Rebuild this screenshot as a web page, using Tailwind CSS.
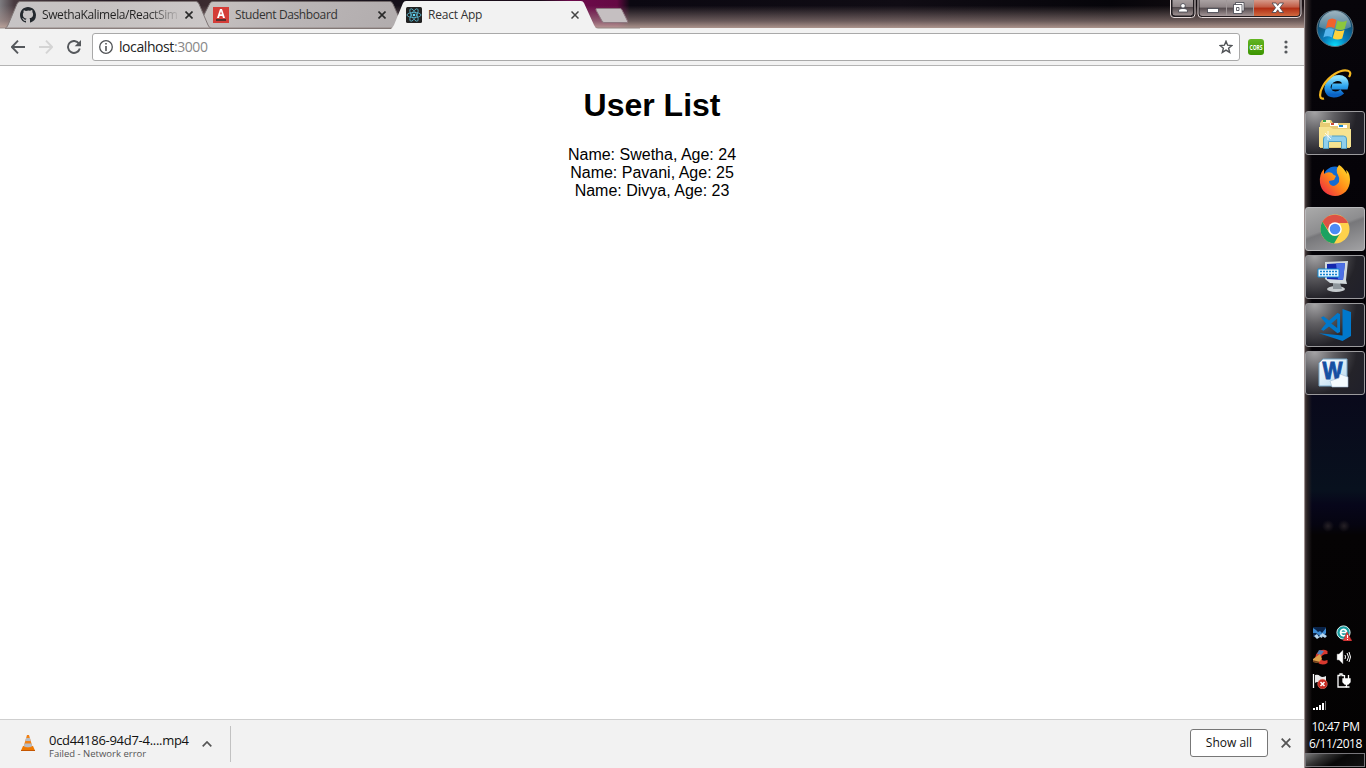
<!DOCTYPE html>
<html lang="en">
<head>
<meta charset="utf-8">
<title>React App</title>
<script src="https://cdn.jsdelivr.net/npm/@tailwindcss/browser@4"></script>
</head>
<body class="w-[1366px] h-[768px] overflow-hidden flex bg-white font-['Open_Sans',sans-serif] text-[#333]">
<main class="w-[1304px] h-full flex flex-col shrink-0">
  <!-- tab strip -->
  <header class="relative h-[28px] shrink-0 flex bg-[linear-gradient(90deg,#7e7c80_0,#493b40_14px,#241923_120px,#3c2c30_210px,#15101a_390px,#1b0c19_540px,#6d0b4c_570px,#650943_617px,#0b0811_630px,#100c14_900px,#06050a_1110px,#1b1215_1304px)]">
    <div class="absolute inset-0 bg-[linear-gradient(180deg,transparent_20%,#a8908b99_75%,#c5aaa0dd_100%)]"></div>
    <svg class="absolute left-0 top-0" width="640" height="29" viewBox="0 0 640 29">
      <defs><linearGradient id="tab" x1="0" x2="1"><stop stop-color="#c7c4c5"/><stop offset=".45" stop-color="#c6c2c1"/><stop offset="1" stop-color="#cbc7c7"/></linearGradient>
      <linearGradient id="tabb" x1="0" x2="1" y2=".1"><stop stop-color="#c8c3c1"/><stop offset=".5" stop-color="#bab5b6"/><stop offset="1" stop-color="#b2adae"/></linearGradient></defs>
      <path d="M197 28.500L210 3Q211 1.500 213 1.500H390Q392 1.500 393 4L404 28.500Z" fill="url(#tabb)" stroke="#706869"/>
      <path d="M5 28.500Q7 27.500 8 25L17 4Q18 1.500 20 1.500H196Q198 1.500 199 4L208 25Q209 28 212 28.500Z" fill="url(#tab)" stroke="#807777"/>
      <path d="M0 28H640" stroke="#938784"/>
      <path d="M391 29Q393 27 394 25L403 3Q404 1 406 1H581Q583 1 584 3L594 25Q595 28 598 29Z" fill="#f2f2f2"/>
      <path d="M597 8.500H620Q621.500 8.500 622 10L627.500 21Q628 22.500 627 22.500H604Q602.500 22.500 602 21L596 10Q595.500 8.500 597 8.500Z" fill="#c5bfc1" stroke="#8d7880"/>
    </svg>
    <div class="relative w-[193px] flex items-center pl-5 pt-0.5">
      <svg width="16" height="16" viewBox="0 0 16 16" fill="#24292e"><path d="M8 0C3.600 0 0 3.600 0 8c0 3.500 2.300 6.500 5.500 7.600.4.100.500-.2.500-.4v-1.400c-2.200.5-2.700-1.100-2.700-1.100-.4-.9-.9-1.200-.9-1.200-.7-.5.1-.5.1-.5.800.1 1.200.8 1.200.8.700 1.300 1.900.9 2.300.7.100-.5.300-.9.500-1.100-1.800-.2-3.600-.9-3.600-4 0-.9.300-1.600.8-2.100-.1-.2-.4-1 .1-2.100 0 0 .7-.2 2.200.8A7.500 7.500 0 0 1 10 3.700c1.500-1 2.200-.8 2.200-.8.400 1.100.2 1.900.1 2.100.5.600.8 1.300.8 2.200 0 3.100-1.900 3.700-3.700 3.900.3.300.6.800.6 1.500v2.600c0 .2.100.5.600.4A8 8 0 0 0 16 8c0-4.400-3.600-8-8-8Z"/></svg>
      <span class="ml-1.5 w-[136px] whitespace-nowrap text-[12px] leading-5 tracking-[-0.39px] bg-[linear-gradient(90deg,#222_78%,#2220_102%)] bg-clip-text text-transparent">SwethaKalimela/ReactSim</span>
      <svg class="ml-[7px] shrink-0" width="8" height="8" viewBox="0 0 8 8"><path d="M.5.500l7 7m0-7l-7 7" stroke="#292929" stroke-width="1.600"/></svg>
    </div>
    <div class="relative w-[193px] flex items-center pl-5 pt-0.5">
      <svg width="16" height="16" viewBox="0 0 16 16"><path fill="#d43d38" d="M0 0h16v16H0z"/><path d="M4 11L7 2h2l3 9h-2l-.6-2H6.600L6 11zM7.100 7.300h1.800L8 4.300z" fill="#fff"/><path fill="#59302f" d="M3 12h10v2H3z"/></svg>
      <span class="ml-1.5 w-[136px] whitespace-nowrap text-[12px] leading-5 tracking-[-0.39px]">Student Dashboard</span>
      <svg class="ml-[7px] shrink-0" width="8" height="8" viewBox="0 0 8 8"><path d="M.5.500l7 7m0-7l-7 7" stroke="#292929" stroke-width="1.600"/></svg>
    </div>
    <div class="relative w-[215px] flex items-center pl-5 pt-0.5">
      <svg width="16" height="16" viewBox="0 0 16 16"><rect width="16" height="16" rx="1.500" fill="#222"/><g fill="none" stroke="#5ab9d2" stroke-width=".8"><ellipse cx="8" cy="8" rx="7" ry="2.600"/><ellipse cx="8" cy="8" rx="7" ry="2.600" transform="rotate(60 8 8)"/><ellipse cx="8" cy="8" rx="7" ry="2.600" transform="rotate(120 8 8)"/></g><circle cx="8" cy="8" r="1.300" fill="#61dafb"/></svg>
      <span class="ml-1.5 w-[136px] whitespace-nowrap text-[12px] leading-5 tracking-[-0.22px]">React App</span>
      <svg class="ml-[7px] shrink-0" width="8" height="8" viewBox="0 0 8 8"><path d="M.5.500l7 7m0-7l-7 7" stroke="#444" stroke-width="1.500"/></svg>
    </div>
    <svg class="relative ml-auto" width="134" height="20" viewBox="0 0 134 20">
      <defs><linearGradient id="glass" y2="1" x2="0"><stop stop-color="#aaa2a3"/><stop offset=".45" stop-color="#8e8486"/><stop offset=".5" stop-color="#544b4e"/><stop offset="1" stop-color="#a59798"/></linearGradient>
      <linearGradient id="close" y2="1" x2="0"><stop stop-color="#d69a8a"/><stop offset=".45" stop-color="#c15a43"/><stop offset=".5" stop-color="#b02c13"/><stop offset="1" stop-color="#d06a40"/></linearGradient></defs>
      <path d="M.5-1V14q0 3.500 3.500 3.500H21.500q3.500 0 3.500-3.500V-1Z" fill="#211c20" stroke="#e4d8d8"/>
      <path d="M2-1V13q0 3 3 3H20.500q3 0 3-3V-1Z" fill="url(#glass)" stroke="#211c20"/>
      <path d="M28-1V14q0 3.500 3.500 3.500H127q4 0 4-3.500V-1Z" fill="#211c20" stroke="#e4d8d8"/>
      <path d="M29.500 0V13q0 3 3 3H56V0Z" fill="url(#glass)"/><path d="M57 0h26v16H57z" fill="url(#glass)"/><path d="M84 0h45.500v13q0 3-3 3H84z" fill="url(#close)"/>
      <path d="M56.500 0v16M83.500 0v16" stroke="#d5cccc" stroke-opacity=".7"/>
      <g fill="#fff" stroke="#41434c" stroke-width=".8"><circle cx="13" cy="5.800" r="2.300"/><path d="M8.500 12V11q0-2.500 4.500-2.500T17.500 11v1Z"/><rect x="37.500" y="8.500" width="11" height="4"/>
      <path d="M65.500 2.500h8.500v8.500h-8.500z"/><path fill-rule="evenodd" d="M63.500 4.500h8.500v9h-8.500zm3 3v3h2.500v-3z"/>
      <path d="M102 3h4l1.700 2.600L109.500 3h4l-3.600 4.700 3.600 4.800h-4l-1.800-2.700-1.700 2.700h-4l3.600-4.800z"/></g>
    </svg>
  </header>
  <!-- toolbar -->
  <nav class="h-[38px] shrink-0 bg-[#f2f2f2] border-b border-[#b4b4b4] flex items-center pl-[11px] pr-4">
    <svg width="14" height="14" viewBox="0 0 14 14" fill="none" stroke="#55585c" stroke-width="1.900"><path d="M7 .7L.9 7 7 13.300M1 7h13"/></svg>
    <svg class="ml-[14px]" width="14" height="14" viewBox="0 0 14 14" fill="none" stroke="#d4d4d4" stroke-width="1.900"><path d="M7 .7L13.100 7 7 13.300M0 7h13"/></svg>
    <svg class="ml-[14px]" width="14" height="14" viewBox="0 0 14 14"><path d="M12 3.600A6 6 0 1 0 12.800 8.500" fill="none" stroke="#55585c" stroke-width="1.900"/><path d="M14 0v6.300H7.700z" fill="#55585c"/></svg>
    <div class="ml-[11px] w-[1148px] h-7 bg-white border border-[#a9a9a9] rounded-[3px] flex items-center pl-1.5 pr-1.5">
      <svg width="14" height="14" viewBox="0 0 14 14"><circle cx="7" cy="7" r="6.300" fill="none" stroke="#505356" stroke-width="1.300"/><path d="M6.200 3h1.600v1.600H6.200zM6.200 6h1.600v5H6.200z" fill="#505356"/></svg>
      <span class="ml-[6px] text-[14px] leading-5 tracking-[-0.42px] text-[#222]">localhost<span class="text-[#888]">:3000</span></span>
      <svg class="ml-auto" width="14" height="14" viewBox="0 0 14 14"><path d="M7 1.300l1.600 3.900 4.300.3-3.300 2.700 1.100 4.200L7 10.100l-3.700 2.300 1.100-4.200L1.100 5.500l4.300-.3z" fill="none" stroke="#505356" stroke-width="1.400"/></svg>
    </div>
    <div class="ml-2 w-4 h-4 shrink-0 rounded-[3px] bg-[linear-gradient(#63b522,#3b9400)]"><svg width="16" height="16" viewBox="0 0 16 16"><text x="1.500" y="10.700" font-family="Open Sans, sans-serif" font-size="7.500" font-weight="bold" fill="#fff" textLength="13" lengthAdjust="spacingAndGlyphs">CORS</text></svg></div>
    <svg class="ml-auto" width="4" height="14" viewBox="0 0 4 14" fill="#55585c"><circle cx="2" cy="2" r="1.600"/><circle cx="2" cy="7" r="1.600"/><circle cx="2" cy="12" r="1.600"/></svg>
  </nav>
  <section class="grow bg-white text-black text-center font-['Liberation_Sans',sans-serif] pt-[21px]">
    <h1 class="text-[32px] leading-[37px] font-bold">User List</h1>
    <div class="mt-[22px] text-[16px] leading-[18px]"><p>Name: Swetha, Age: 24</p><p>Name: Pavani, Age: 25</p><p>Name: Divya, Age: 23</p></div>
  </section>
  <!-- downloads shelf -->
  <footer class="h-[49px] shrink-0 bg-[#f2f2f2] border-t border-[#cfcfcf] flex items-center pl-[21px] pr-[13px]">
    <svg class="-mt-0.5" width="14" height="16" viewBox="0 0 14 16"><path d="M2 11h10l2 4.500H0z" fill="#ef7900"/><path d="M6 0h2l3.500 12q-4.500 2-9 0z" fill="#f08116"/><path d="M5.100 3h3.800l.8 3H4.300zM3.500 8.500h7l.7 2.800q-4.200 1.700-8.400 0z" fill="#b9bcc2"/><path d="M0 15h14v1H0z" fill="#c55600"/></svg>
    <div class="ml-[14px] w-[153px] pt-1"><div class="text-[13px] leading-[15px] text-[#111] whitespace-nowrap tracking-[-0.28px]">0cd44186-94d7-4....mp4</div><div class="text-[9.5px] leading-[11px] text-[#555] whitespace-nowrap">Failed - Network error</div></div>
    <svg width="10" height="6" viewBox="0 0 10 6"><path d="M.7 5.300L5 1l4.300 4.300" fill="none" stroke="#555" stroke-width="1.700"/></svg>
    <div class="ml-[18px] w-px h-9 bg-[#c2c2c2]"></div>
    <button class="ml-auto w-[78px] h-7 -mt-0.5 bg-white border border-[#777] rounded-[3px] text-[12px] leading-5 text-[#111]">Show all</button>
    <svg class="ml-[13px] -mt-0.5" width="10" height="10" viewBox="0 0 10 10"><path d="M.7.700l8.600 8.600m0-8.600L.7 9.300" stroke="#555" stroke-width="1.800"/></svg>
  </footer>
</main>
<!-- taskbar -->
<aside class="w-[62px] h-full shrink-0 flex flex-col items-start bg-[linear-gradient(90deg,#8c8281_0,#b0a3a2_1px,#453b3c_1.500px,#2b2425_3px,#0000_8px),radial-gradient(circle_at_24px_526px,#262126_0,#0000_6px),radial-gradient(circle_at_40px_526px,#262126_0,#0000_6px),linear-gradient(#07050a_0,#030106_350px,#09091b_395px,#08111e_490px,#07061a_505px,#050410_525px,#050304_535px,#030202_768px)] pl-[1px]">
  <div class="w-[60px] h-[57px] flex items-center justify-center">
    <svg width="38" height="38" viewBox="0 0 38 38"><defs><radialGradient id="orb" cx=".5" cy="1" r=".85"><stop stop-color="#08e4ff"/><stop offset=".4" stop-color="#087dbc"/><stop offset="1" stop-color="#12405d"/></radialGradient><linearGradient id="shine" x2="0" y2="1"><stop stop-color="#ccdce3"/><stop offset="1" stop-color="#5a899e"/></linearGradient></defs><circle cx="19" cy="18.500" r="18" fill="url(#orb)" stroke="#60747f"/><path d="M3 17a16 16 0 0 1 32 0Q20 24 3 17z" fill="url(#shine)" opacity=".75"/><path d="M12 10q4-3 8.500 0l-2.200 8.300q-4.300-2.500-8.500 0z" fill="#f1622c"/><path d="M21.500 10.500q4.500 2.500 9.500 0l-2.300 8.500q-4.700 2-9.400-.2z" fill="#8cc63d"/><path d="M9.500 19.500q4-2.500 8.500 0l-2.200 8q-4.300-2.300-8.500 0z" fill="#55b5ed"/><path d="M19 20q4.500 2.200 9.500 0l-2.300 8.500q-5 2-9.500-.3z" fill="#ffd23c"/></svg>
  </div>
  <div class="w-[60px] h-[52px] pt-1 flex items-center justify-center">
    <svg width="34" height="34" viewBox="0 0 34 34"><defs><linearGradient id="ie" x2="0" y2="1"><stop stop-color="#8be0ff"/><stop offset=".5" stop-color="#2ea5ee"/><stop offset="1" stop-color="#0a62c4"/></linearGradient></defs><g transform="translate(4.500 1) skewX(-12)"><path d="M24.500 22.500A8.800 8.300 0 1 1 26.500 17.500H13" fill="none" stroke="url(#ie)" stroke-width="6"/></g><path d="M31 9Q34 4 30 2.800C23 .5 11 8 5 18 1 25 1 32 6 30.500" fill="none" stroke="#f5b820" stroke-width="2.200"/></svg>
  </div>
  <div class="mt-[2px] flex flex-col gap-1">
    <div class="w-[60px] h-11 rounded-[3px] border border-[#9b9a9d] bg-[radial-gradient(circle_at_15%_0%,#a5a4a6_0,#605f63_30%,#242329_65%,#20202b_100%)] flex items-center justify-center pt-1">
      <svg width="34" height="32" viewBox="0 0 34 32"><path d="M2 4l2-3h9l2 3h17v25H2z" fill="#e8cc75"/><path d="M5 1h7v3H5z" fill="#fff2bb"/><path d="M5 1h3v2H5z" fill="#3aa64a"/><path d="M12 4h8v3h-8z" fill="#fff"/><path d="M13 4h3v2h-3z" fill="#ce4b35"/><path d="M20 6h9v3h-9z" fill="#fff"/><path d="M21 6h4v2h-4z" fill="#1687cd"/><path d="M1 8h11l3 2h18v18H1z" fill="#f6e391"/><path d="M5.500 29.500V20q0-3 3-3h17q3 0 3 3v9.500h-5v-7h-13v7z" fill="#8fcfed" stroke="#519fc3"/><path d="M10 12v9M6 17h8M7 14l6 6" stroke="#fff" stroke-width=".8"/></svg>
    </div>
    <div class="w-[60px] h-11 flex items-center justify-center">
      <svg width="32" height="32" viewBox="0 0 32 32"><defs><linearGradient id="fox" x1="1" x2="0" y2="1"><stop stop-color="#ffe82c"/><stop offset=".5" stop-color="#ff8a18"/><stop offset="1" stop-color="#ec174b"/></linearGradient></defs><circle cx="16" cy="13" r="11.500" fill="#126bd3"/><path d="M20 0q-4 5-1 10 2 3 1 7-3 4-6 4-4-1-4-5l5-1 2-4q-3-1-4-3-4-2-8 1L5 4Q0 9 1 18c1 8 8 13 15 13 9 0 15-7 15-16 0-6-2-9-4-10l1 4Q24 2 20 0z" fill="url(#fox)"/></svg>
    </div>
    <div class="w-[60px] h-11 rounded-[3px] border border-[#b9b9bb] bg-[linear-gradient(160deg,#aaa_0,#8d8d8f_45%,#77777a_50%,#a2a2a4_100%)] flex items-center justify-center">
      <svg width="30" height="30" viewBox="0 0 30 30"><circle cx="15" cy="15" r="14.500" fill="#ffd24c"/><path d="M2.400 7.800A14.500 14.500 0 0 1 28 9H15a6.500 6.500 0 0 0-6 8z" fill="#dd5144"/><path d="M2.400 7.800A14.500 14.500 0 0 0 14 29.500L20.500 18.500a6.500 6.500 0 0 1-11.500 0z" fill="#1ba261"/><circle cx="15" cy="15" r="6.800" fill="#fff"/><circle cx="15" cy="15" r="5.300" fill="#4c8bf5"/></svg>
    </div>
    <div class="w-[60px] h-11 rounded-[3px] border border-[#9b9a9d] bg-[radial-gradient(circle_at_15%_0%,#a5a4a6_0,#605f63_30%,#242329_65%,#20202b_100%)] flex items-center justify-center pr-1">
      <svg width="34" height="32" viewBox="0 0 34 32"><ellipse cx="20" cy="28" rx="9" ry="3" fill="#c6cbce"/><path d="M17 22h7l2 6h-9z" fill="#8f979c"/><path d="M9 1l23-1-2 19 1 4-17-1-5-4z" fill="#d3dadd"/><path d="M11 3l18-1-2 17-16-1z" fill="#1527ad"/><path d="M20 2.500l9-.5-2 17-5-.4z" fill="#4c70e6"/><path d="M2 8h21v8H2z" fill="#e6f6ff" stroke="#128ad4"/><path d="M4 10.500h17M4 13.500h17" stroke="#1683d0" stroke-width="1.700" stroke-dasharray="2 1"/></svg>
    </div>
    <div class="w-[60px] h-11 rounded-[3px] border border-[#9b9a9d] bg-[radial-gradient(circle_at_15%_0%,#a5a4a6_0,#605f63_30%,#242329_65%,#20202b_100%)] flex items-center justify-center">
      <svg width="32" height="32" viewBox="0 0 32 32" fill="#0078cc"><path d="M23.500 0L32 3v24l-8.500 5L0 24.200l23.500 2.300z"/><path fill-rule="evenodd" d="M2 8.500l2.500-1.300L10 11.500 18.500 4 21 5v18l-2.500 1.300L10 17.500l-5.500 4.300L2 20.500l5-6zM18.200 9.500L12.300 14.500l5.900 4.600z"/></svg>
    </div>
    <div class="w-[60px] h-11 rounded-[3px] border border-[#9b9a9d] bg-[radial-gradient(circle_at_15%_0%,#a5a4a6_0,#605f63_30%,#242329_65%,#20202b_100%)] flex items-center justify-center pr-1">
      <svg width="31" height="30" viewBox="0 0 31 30"><defs><linearGradient id="word" x2="1" y2="1"><stop stop-color="#fff"/><stop offset="1" stop-color="#b4d8ee"/></linearGradient></defs><path d="M5 1h24v27H1V5z" fill="url(#word)" stroke="#7aa8c8"/><text x="4.500" y="20.500" font-family="Liberation Sans, sans-serif" font-size="23" font-weight="bold" fill="#154fa2" stroke="#154fa2" stroke-width=".9" textLength="20" lengthAdjust="spacingAndGlyphs">W</text><path d="M12 23l9-3 1-4 8 3v10H14z" fill="#f4fbff" stroke="#9eb9d3" stroke-width=".6"/></svg>
    </div>
  </div>
  <div class="mt-auto w-full grid grid-cols-[24px_24px] gap-y-2 pl-[7px] mb-[5px]">
    <svg width="16" height="16" viewBox="0 0 16 16"><path d="M1 2h13v10H1z" fill="#0a2348"/><path d="M1 3l3 2 2 2 2-1 2 2 4-5v5l-3 3H8l-4-3H1z" fill="#3e8bd2"/><path d="M2 11l3-2 2 3 2-3 2 1-1 3-2-1-3 2zM10 8l5 3-2 2-3-2z" fill="#b8d8ef"/></svg>
    <svg width="16" height="16" viewBox="0 0 16 16"><circle cx="7.500" cy="7.500" r="6.600" fill="#189da1" stroke="#d9f3f2"/><path d="M4.500 7.500h6A3 3.200 0 1 0 9.500 10" fill="none" stroke="#fff" stroke-width="1.700"/><path d="M11 7l5 9H7z" fill="#e13e3e" stroke="#a82020" stroke-width=".5"/><path d="M11.500 10v3m0 1v1" stroke="#fff"/></svg>
    <svg width="16" height="16" viewBox="0 0 16 16"><path d="M15.500 5V2A8 8 0 0 0 6 3a7 7 0 0 0-1 10q5 4.500 10.500 1v-3q-5 2-6.500-1 0-5 6.500-5z" fill="#d8392f"/><path d="M7 1l5 1-3 4-4-1z" fill="#547eb5"/><path d="M1 10l7-5 2 5-4 4-5-1z" fill="#dda14c"/><path d="M1 12l6 1.500" stroke="#743f1b" stroke-width="1.500"/></svg>
    <svg width="16" height="16" viewBox="0 0 16 16"><path d="M1 5h2l4-4v14l-4-4H1z" fill="#fff" stroke="#777" stroke-width=".5"/><path d="M9 6q1 2 0 4M11 4q3 4 0 8M13 3q3 5 0 10" fill="none" stroke="#fff" stroke-width="1"/></svg>
    <svg width="16" height="16" viewBox="0 0 16 16"><path d="M1.500 1v14" stroke="#fff" stroke-width="1.300"/><path d="M3 2q3-1 5 1t6 0v7q-3 2-6 0t-5 0z" fill="#e9e9ea"/><circle cx="10.500" cy="11" r="4.800" fill="#c62920" stroke="#ef8579" stroke-width=".5"/><path d="M8.500 9l4 4m0-4l-4 4" stroke="#fff" stroke-width="1.500"/></svg>
    <svg width="16" height="16" viewBox="0 0 16 16" fill="none" stroke="#fff" stroke-width="1.300"><path d="M8 2.500H6V1H4v1.500H2V14h8v-1"/><path d="M7 6h7v3l-2 2H9L7 9z" fill="#fff"/><path d="M8.500 6V2M12.500 6V2M10.500 11v3h3"/></svg>
    <svg width="16" height="16" viewBox="0 0 16 16"><path d="M1 11h2v2H1zM4 10h2v3H4zM7 8h2v5H7zM10 6h2v7h-2z" fill="#fff"/><path d="M13 4h1v9h-1z" fill="#777"/></svg>
  </div>
  <div class="w-[61px] flex flex-col items-center text-white text-[12px] leading-[17px] tracking-[-0.45px] whitespace-nowrap mb-px"><div>10:47 PM</div><div>6/11/2018</div></div>
  <div class="w-[60px] h-[14px] mb-px shrink-0 border border-[#77767a] bg-[linear-gradient(150deg,#777_0,#333_28%,#080808_55%,#111_100%)]"></div>
</aside>
</body>
</html>
